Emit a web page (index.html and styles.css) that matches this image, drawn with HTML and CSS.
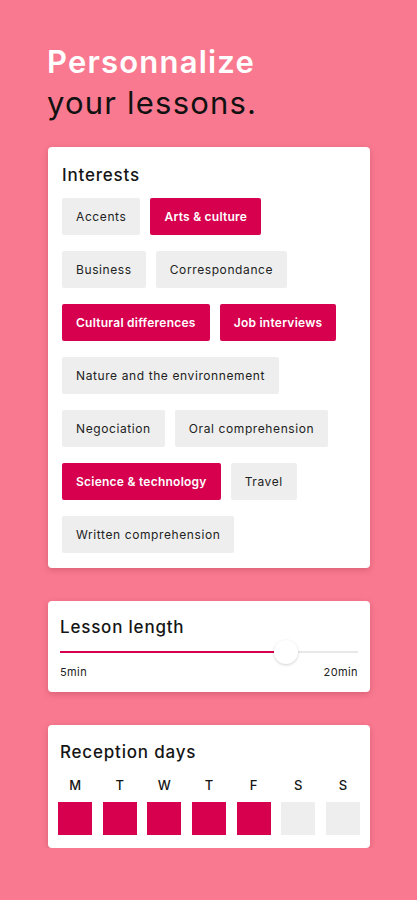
FILE: index.html
```html
<!DOCTYPE html>
<html lang="en">
<head>
    <meta charset="UTF-8">
    <meta name="viewport" content="width=device-width, initial-scale=1.0">
    <title>Personnalize your lessons</title>
    <link rel="stylesheet" href="styles.css">
</head>
<body>
    <h1 class="title"><span class="light">Personnalize</span><br>your lessons.</h1>

    <section class="card interests">
        <h2>Interests</h2>
        <div class="chips">
            <span class="chip">Accents</span>
            <span class="chip on">Arts &amp; culture</span>
            <span class="chip">Business</span>
            <span class="chip">Correspondance</span>
            <span class="chip on">Cultural differences</span>
            <span class="chip on">Job interviews</span>
            <span class="chip">Nature and the environnement</span>
            <span class="chip">Negociation</span>
            <span class="chip">Oral comprehension</span>
            <span class="chip on">Science &amp; technology</span>
            <span class="chip">Travel</span>
            <span class="chip">Written comprehension</span>
        </div>
    </section>

    <section class="card length">
        <h2>Lesson length</h2>
        <div class="slider">
            <div class="fill" style="width: 76%"></div>
            <div class="thumb"></div>
        </div>
        <div class="limits">
            <span>5min</span>
            <span>20min</span>
        </div>
    </section>

    <section class="card days">
        <h2>Reception days</h2>
        <div class="week">
            <div class="day"><span>M</span><div class="box on"></div></div>
            <div class="day"><span>T</span><div class="box on"></div></div>
            <div class="day"><span>W</span><div class="box on"></div></div>
            <div class="day"><span>T</span><div class="box on"></div></div>
            <div class="day"><span>F</span><div class="box on"></div></div>
            <div class="day"><span>S</span><div class="box"></div></div>
            <div class="day"><span>S</span><div class="box"></div></div>
        </div>
    </section>
</body>
</html>
```

FILE: styles.css
```css
body{
    margin: 0;
    background-color: #f97a90;
    font-family: Inter, "Open Sans", sans-serif;
    color: #151515;
}

.title{
    margin: 0;
    padding: 41px 0 0 47px;
    font-size: 31px;
    line-height: 41px;
    font-weight: 400;
    letter-spacing: 1.2px;
    color: #111;
}

.title .light{
    color: #fff;
    font-weight: 600;
}

.card{
    background-color: #fff;
    width: 322px;
    margin: 24px 0 0 48px;
    border-radius: 4px;
    box-shadow: 0 2px 6px rgba(120, 20, 40, 0.25);
    box-sizing: border-box;
}

.card h2{
    margin: 0;
    font-size: 17px;
    line-height: 24px;
    font-weight: 500;
    letter-spacing: 0.8px;
}

/* interests */
.interests{
    padding: 16px 14px 15px;
}

.chips{
    display: flex;
    flex-wrap: wrap;
    gap: 16px 10px;
    margin-top: 11px;
    padding-right: 12px;
}

.chip{
    height: 37px;
    line-height: 37px;
    padding: 0 14px;
    background-color: #eeeeee;
    border-radius: 2px;
    font-size: 12px;
    letter-spacing: 0.6px;
    color: #222;
}

.chip.on{
    background-color: #d6004e;
    color: #fff;
    font-weight: 600;
    letter-spacing: 0.25px;
}

/* lesson length */
.length{
    margin-top: 33px;
    padding: 14px 12px 13px 12px;
}

.slider{
    position: relative;
    height: 24px;
    margin-top: 1px;
}

.slider::before{
    content: "";
    position: absolute;
    left: 0;
    right: 0;
    top: 11px;
    height: 2px;
    background-color: #e8e8e8;
}

.fill{
    position: absolute;
    left: 0;
    top: 11px;
    height: 2px;
    background-color: #d6004e;
}

.thumb{
    position: absolute;
    left: 76%;
    top: 0;
    width: 24px;
    height: 24px;
    margin-left: -12px;
    border-radius: 50%;
    background-color: #fff;
    box-shadow: 0 1px 3px rgba(0, 0, 0, 0.18);
}

.limits{
    display: flex;
    justify-content: space-between;
    margin-top: 1px;
    font-size: 11px;
    line-height: 14px;
    letter-spacing: 0.4px;
    color: #222;
}

/* reception days */
.days{
    margin-top: 33px;
    padding: 15px 10px 13px;
}

.days h2{
    padding-left: 2px;
}

.week{
    display: grid;
    grid-template-columns: repeat(7, 1fr);
    gap: 10.5px;
    margin-top: 13px;
}

.day{
    display: flex;
    flex-direction: column;
    align-items: center;
    gap: 9px;
}

.day span{
    font-size: 13px;
    line-height: 16px;
    font-weight: 500;
}

.box{
    width: 100%;
    height: 33px;
    background-color: #eeeeee;
}

.box.on{
    background-color: #d6004e;
}
```
